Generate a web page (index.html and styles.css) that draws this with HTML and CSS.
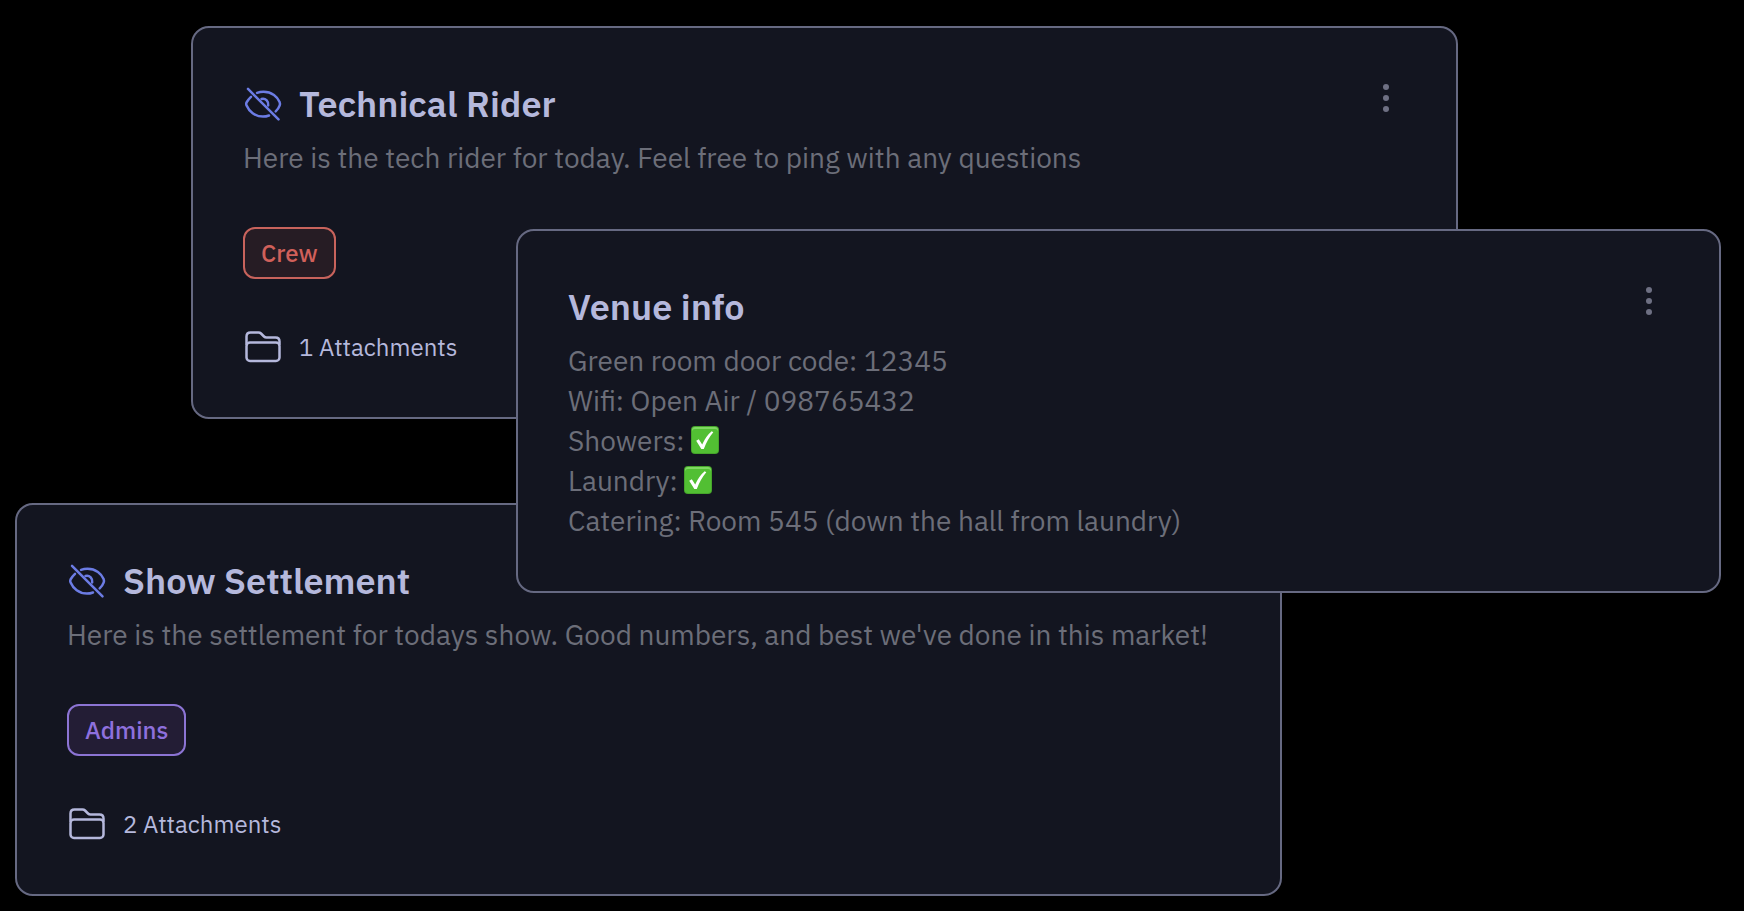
FILE: index.html
```
<!DOCTYPE html>
<html lang="en">
<head>
  <meta charset="utf-8">
  <meta name="viewport" content="width=device-width, initial-scale=1">
  <title>Event notes</title>
  <link rel="stylesheet" href="styles.css">
</head>
<body>
  <svg class="sprite" aria-hidden="true">
    <symbol id="icon-hidden" viewBox="0 0 40 40">
      <path d="M14 8.900Q17 7.700 20.500 7.700C29 7.700 34.500 12.900 36.600 17.900Q37.400 19.800 36.600 21.700Q35.500 24.900 32.700 27.400"/>
      <path d="M8 12.800Q5 15.600 3.600 18.400Q2.800 20 3.600 21.600C6 27.400 12 32.600 20 32.600Q23 32.600 26 31.500"/>
      <path d="M18.500 15Q21.500 14.200 23.700 16.400Q25.700 18.600 25.200 21.400"/>
      <path d="M5 4.900L35.500 35.400"/>
    </symbol>
    <symbol id="icon-folder" viewBox="0 0 40 40">
      <path d="M3.500 17V9.500Q3.500 5.500 7.500 5.500H15.500Q17 5.500 18 6.500L21 9.500Q22 10.500 23.500 10.500H32.500Q36.500 10.500 36.500 14.500V17"/>
      <rect x="3.500" y="15.500" width="33" height="18.500" rx="3.500"/>
    </symbol>
    <symbol id="icon-more" viewBox="0 0 40 28">
      <circle cx="20" cy="3" r="3"/>
      <circle cx="20" cy="14" r="3"/>
      <circle cx="20" cy="25" r="3"/>
    </symbol>
    <symbol id="icon-check" viewBox="0 0 28 28">
      <rect width="28" height="28" rx="4" fill="#46a52b"/>
      <rect x="1" y="1" width="26" height="25" rx="3" fill="#7fd862"/>
      <rect x="1" y="3" width="26" height="24" rx="3" fill="#52bf33"/>
      <path d="M5.200 14.800L7.800 13.300L11.200 18.500Q15 10 20.700 5.300L22.300 6.200Q16.200 13.500 12.800 23H10.300Z" fill="#fff"/>
    </symbol>
  </svg>

  <main class="board">
    <article class="card card-rider">
      <header class="card-head">
        <h2 class="title"><svg class="icon icon-hidden" aria-hidden="true"><use href="#icon-hidden"/></svg>Technical Rider</h2>
        <button class="more" type="button" aria-label="Technical Rider options"><svg><use href="#icon-more"/></svg></button>
      </header>
      <p class="body">Here is the tech rider for today. Feel free to ping with any questions</p>
      <span class="tag tag-crew">Crew</span>
      <div class="files"><svg class="icon" aria-hidden="true"><use href="#icon-folder"/></svg>1 Attachments</div>
    </article>

    <article class="card card-settlement">
      <header class="card-head">
        <h2 class="title"><svg class="icon icon-hidden" aria-hidden="true"><use href="#icon-hidden"/></svg>Show Settlement</h2>
      </header>
      <p class="body">Here is the settlement for todays show. Good numbers, and best we've done in this market!</p>
      <span class="tag tag-admins">Admins</span>
      <div class="files"><svg class="icon" aria-hidden="true"><use href="#icon-folder"/></svg>2 Attachments</div>
    </article>

    <article class="card card-venue">
      <header class="card-head">
        <h2 class="title">Venue info</h2>
        <button class="more" type="button" aria-label="Venue info options"><svg><use href="#icon-more"/></svg></button>
      </header>
      <p class="body">
        Green room door code: 12345<br>
        Wifi: Open Air / 098765432<br>
        Showers: <svg class="check" role="img" aria-label="Yes"><use href="#icon-check"/></svg><br>
        Laundry: <svg class="check" role="img" aria-label="Yes"><use href="#icon-check"/></svg><br>
        Catering: Room 545 (down the hall from laundry)
      </p>
    </article>
  </main>
</body>
</html>
```
FILE: styles.css
```
* {
  box-sizing: border-box;
}

body {
  margin: 0;
  background: #000;
  color: #b5b8dc;
  font-family: "IBM Plex Sans", Roboto, sans-serif;
}

.sprite {
  position: absolute;
  width: 0;
  height: 0;
}

/* Overlapping cards share the tracks of one grid */
.board {
  display: grid;
  grid-template-columns: 176fr 325fr 766fr 176fr 263fr;
  grid-template-rows: 203px 190px 84px 90px auto;
  padding: 26px 23px 15px 15px;
}

.card {
  display: flex;
  flex-direction: column;
  padding: 56px 50px 50px;
  border: 2px solid #666982;
  border-radius: 18px;
  background: #131520;
}

.card-rider {
  grid-area: 1 / 2 / 3 / 5;
}

.card-settlement {
  grid-area: 4 / 1 / 6 / 4;
}

.card-venue {
  grid-area: 2 / 3 / 5 / 6;
}

.card-head {
  display: flex;
  align-items: flex-start;
  justify-content: space-between;
}

.title {
  display: flex;
  align-items: center;
  gap: 16px;
  margin: 0;
  font-size: 36px;
  font-weight: 600;
  line-height: 40px;
}

.icon {
  flex: none;
  width: 40px;
  height: 40px;
  fill: none;
  stroke: currentColor;
  stroke-width: 2.5;
  stroke-linecap: round;
  stroke-linejoin: round;
}

.icon-hidden {
  color: #6c7ce4;
}

.more {
  width: 40px;
  height: 28px;
  padding: 0;
  border: 0;
  background: none;
  color: #6e7083;
  cursor: pointer;
}

.more svg {
  display: block;
  width: 40px;
  height: 28px;
  fill: currentColor;
}

.body {
  margin: 14px 0 0;
  color: #6c6e79;
  font-size: 28px;
  line-height: 40px;
}

.check {
  width: 28px;
  height: 28px;
  vertical-align: -3px;
}

.tag {
  align-self: flex-start;
  margin-top: 49px;
  padding: 8px 16px;
  border: 2px solid;
  border-radius: 12px;
  font-size: 24px;
  font-weight: 500;
  line-height: 32px;
}

.tag-crew {
  border-color: #c8635c;
  background: #261c24;
  color: #d0605a;
}

.tag-admins {
  border-color: #8c74d4;
  background: #231d35;
  color: #8e70dd;
}

.files {
  display: flex;
  align-items: center;
  gap: 16px;
  margin-top: 48px;
  font-size: 24px;
  line-height: 40px;
}
```
